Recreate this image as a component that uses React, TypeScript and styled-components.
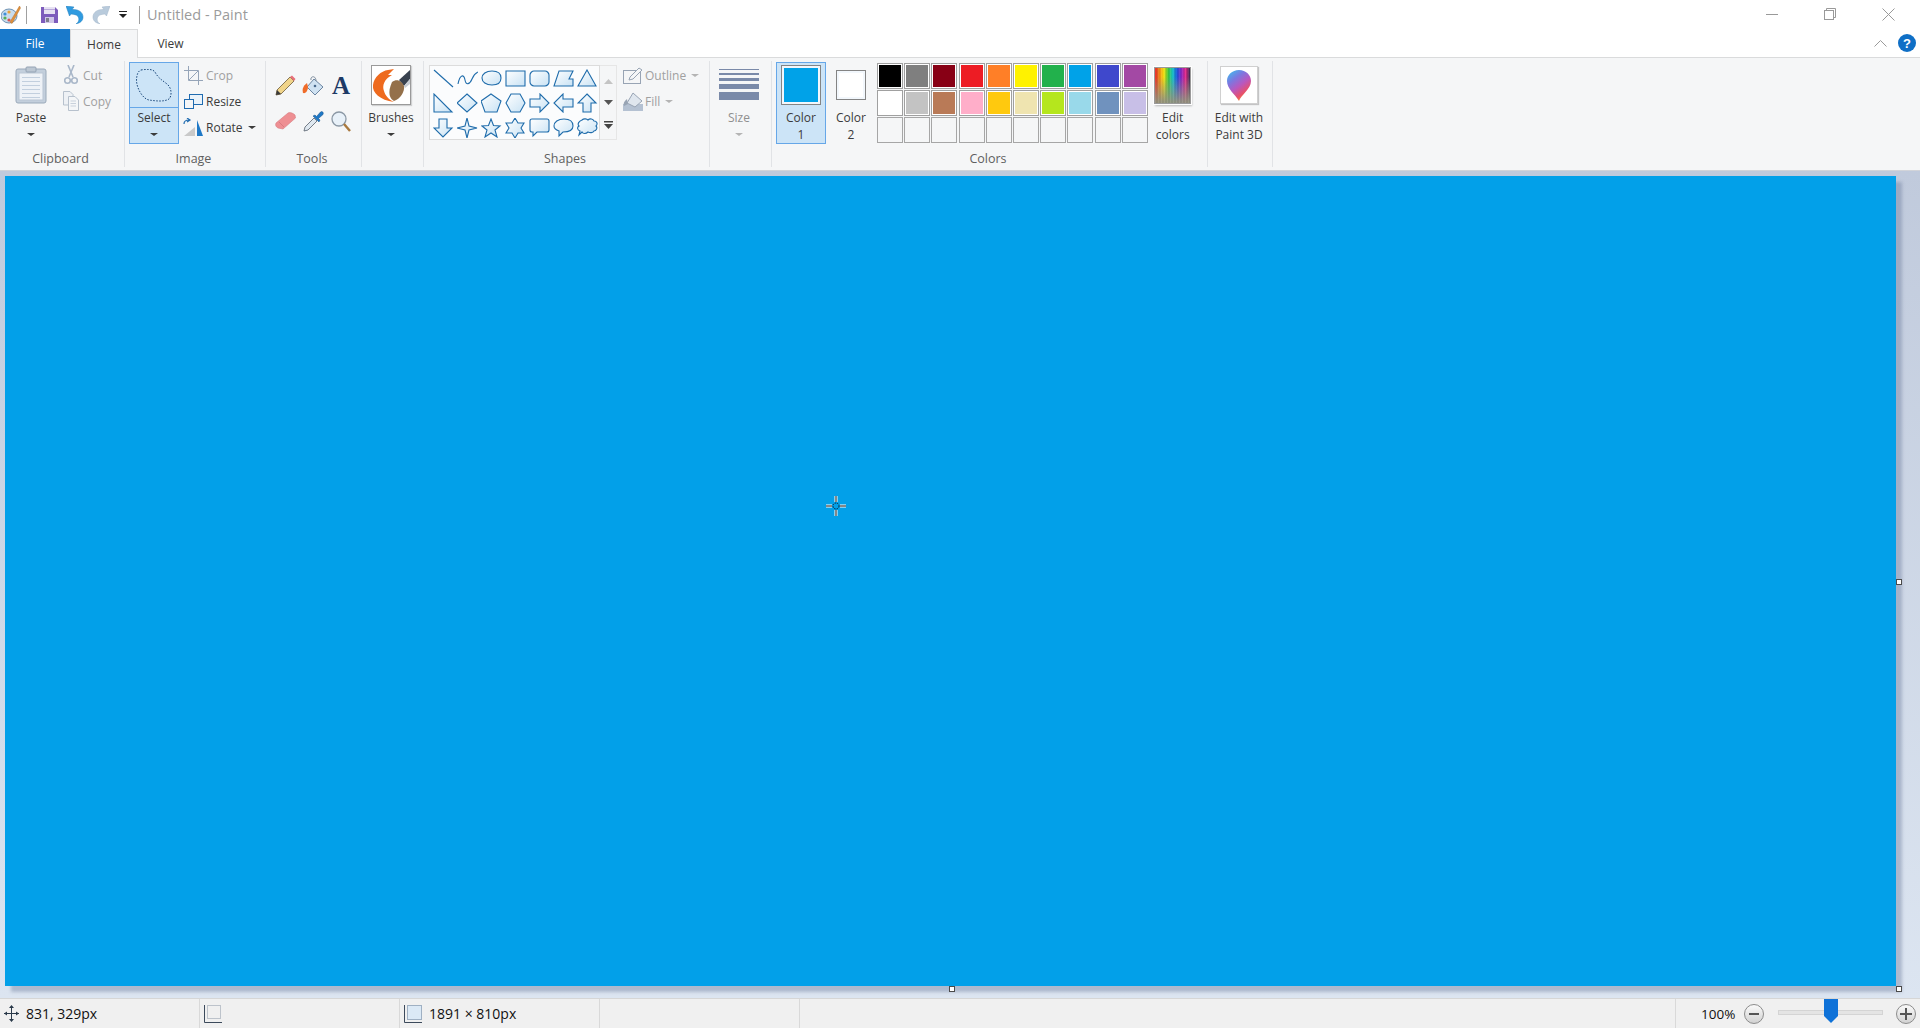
// Paint window - ribbon, canvas and status bar
import React from 'react';
import styled, { createGlobalStyle } from 'styled-components';

const GlobalStyle = createGlobalStyle`
  html, body {
    margin: 0;
    padding: 0;
    height: 100%;
    overflow: hidden;
  }
  #root {
    height: 100%;
  }
  * {
    box-sizing: border-box;
  }
`;

const Window = styled.div`
  width: 1920px;
  height: 1028px;
  display: flex;
  flex-direction: column;
  background: #fff;
  font-family: 'Open Sans', 'Noto Sans', sans-serif;
  font-size: 12px;
  color: #3b3b3b;
  overflow: hidden;
`;

/* ---------- title bar ---------- */
const TitleBar = styled.div`
  height: 29px;
  flex: none;
  display: flex;
  align-items: center;
`;

const QuickAccess = styled.div`
  display: flex;
  align-items: center;
  width: 147px;
  flex: none;
`;

const QatSlot = styled.div<{ $w: number }>`
  width: ${(p) => p.$w}px;
  flex: none;
  display: flex;
  justify-content: center;
  align-items: center;
`;

const Mirrored = styled.span`
  display: flex;
  transform: scaleX(-1);
`;

const QatDivider = styled.div`
  width: 1px;
  height: 18px;
  background: #a0a0a0;
  flex: none;
`;

const WindowTitle = styled.div`
  flex: 1;
  font-size: 14.5px;
  color: #9b9b9b;
`;

const WindowButtons = styled.div`
  display: flex;
  padding-right: 2px;
`;

const WindowButton = styled.div`
  width: 58.5px;
  display: flex;
  justify-content: center;
`;

/* ---------- tabs ---------- */
const TabRow = styled.div`
  height: 29px;
  flex: none;
  display: flex;
  align-items: stretch;
  border-bottom: 1px solid #dadbdc;
`;

const FileTab = styled.div`
  width: 70px;
  height: 28px;
  background: #1979ca;
  color: #fff;
  display: flex;
  align-items: center;
  justify-content: center;
`;

const Tab = styled.div<{ $active?: boolean }>`
  width: ${(p) => (p.$active ? '68px' : '65px')};
  height: 29px;
  display: flex;
  align-items: center;
  justify-content: center;
  color: #3b3b3b;
  background: ${(p) => (p.$active ? '#f5f6f7' : 'transparent')};
  border: ${(p) => (p.$active ? '1px solid #dadbdc' : 'none')};
  border-bottom: none;
`;

const TabRight = styled.div`
  margin-left: auto;
  display: flex;
  align-items: center;
  gap: 11px;
  padding-right: 4px;
`;

const HelpBadge = styled.div`
  width: 18px;
  height: 18px;
  border-radius: 50%;
  background: #0f6fc6;
  color: #fff;
  font-family: 'Liberation Sans', sans-serif;
  font-weight: 700;
  font-size: 13px;
  display: flex;
  align-items: center;
  justify-content: center;
`;

/* ---------- ribbon ---------- */
const Ribbon = styled.div`
  height: 112px;
  flex: none;
  display: flex;
  background: #f5f6f7;
  padding: 3px 0;
`;

const Group = styled.div<{ $w: number }>`
  width: ${(p) => p.$w}px;
  flex: none;
  display: flex;
  flex-direction: column;
  border-right: 1px solid #e1e3e6;
`;

const GroupBody = styled.div<{ $pl?: number; $gap?: number }>`
  height: 90px;
  padding-top: 1px;
  padding-left: ${(p) => p.$pl ?? 0}px;
  display: flex;
  gap: ${(p) => p.$gap ?? 0}px;
`;

const GroupLabel = styled.div`
  flex: 1;
  display: flex;
  align-items: center;
  justify-content: center;
  padding-right: 3px;
  color: #5f5f5f;
  font-size: 12.5px;
`;

const LargeButton = styled.div<{ $w: number; $pressed?: boolean; $disabled?: boolean }>`
  width: ${(p) => p.$w}px;
  height: 82px;
  flex: none;
  display: flex;
  flex-direction: column;
  align-items: center;
  padding-top: 2px;
  text-align: center;
  line-height: 17px;
  color: ${(p) => (p.$disabled ? '#8f8f8f' : '#3b3b3b')};
  background: ${(p) => (p.$pressed ? '#cce4f7' : 'transparent')};
  border: 1px solid ${(p) => (p.$pressed ? '#66a7e8' : 'transparent')};
`;

const SplitButton = styled(LargeButton)`
  padding-top: 0;
`;

const IconSlot = styled.div`
  height: 40px;
  margin-bottom: 4px;
  flex: none;
  display: flex;
  align-items: center;
  justify-content: center;
`;

const Caret = styled.div<{ $color?: string }>`
  width: 0;
  height: 0;
  margin-top: 7px;
  border-left: 4px solid transparent;
  border-right: 4px solid transparent;
  border-top: 3px solid ${(p) => p.$color ?? '#3b3b3b'};
`;

const InlineCaret = styled(Caret)`
  margin: 0 0 0 3px;
`;

const SplitTop = styled.div`
  width: 100%;
  height: 45px;
  flex: none;
  display: flex;
  align-items: center;
  justify-content: center;
  border-bottom: 1px solid #66a7e8;
`;

const SplitLabel = styled.span`
  margin-top: 1px;
`;

const SmallColumn = styled.div<{ $pl?: number }>`
  display: flex;
  flex-direction: column;
  padding-left: ${(p) => p.$pl ?? 0}px;
`;

const SmallRow = styled.div<{ $disabled?: boolean }>`
  height: 26px;
  display: flex;
  align-items: center;
  gap: 2px;
  color: ${(p) => (p.$disabled ? '#a0a0a0' : '#3b3b3b')};
`;

const SmallIcon = styled.div`
  width: 21px;
  flex: none;
  display: flex;
  justify-content: center;
`;

const ToolGrid = styled.div`
  display: grid;
  grid-template-columns: repeat(3, 28px);
  grid-auto-rows: 36px;
  padding-top: 5px;
  justify-items: center;
  align-items: center;
`;

const TextToolGlyph = styled.span`
  font-family: 'Liberation Serif', serif;
  font-weight: 700;
  font-size: 25px;
  line-height: 25px;
  color: #1d3a66;
`;

const BrushFrame = styled.div`
  width: 40px;
  height: 40px;
  border: 1px solid #9a9a9a;
  background: #fff;
  box-shadow: 1px 1px 1px rgba(0, 0, 0, 0.15);
`;

const ShapeGallery = styled.div`
  width: 171px;
  height: 75px;
  margin-top: 3px;
  border: 1px solid #dcdcdc;
  background: #fbfcfd;
  display: grid;
  grid-template-columns: repeat(7, 24px);
  grid-auto-rows: 24.3px;
  padding: 1px 0 0 1px;
  justify-items: center;
  align-items: center;
`;

const GalleryScroll = styled.div`
  width: 17px;
  height: 75px;
  margin-top: 3px;
  border: 1px solid #e6e6e6;
  border-left: none;
  display: flex;
  flex-direction: column;
  align-items: center;
  justify-content: space-around;
  padding: 5px 0 2px;
`;

const SizeStack = styled.div`
  width: 40px;
  height: 33px;
  display: flex;
  flex-direction: column;
  gap: 3px;
`;

const SizeLine = styled.div<{ $h: number }>`
  height: ${(p) => p.$h}px;
  background: #7a8aa9;
  flex: none;
`;

const ColorFrame = styled.div<{ $size: number; $color: string }>`
  width: ${(p) => p.$size}px;
  height: ${(p) => p.$size}px;
  border: 1px solid #848484;
  background: ${(p) => p.$color};
  box-shadow: inset 0 0 0 2px #f2f7fc;
`;

const Palette = styled.div`
  display: grid;
  grid-template-columns: repeat(10, 26px);
  grid-auto-rows: 26px;
  gap: 1px 1.2px;
  margin: 1px 0 0 1px;
  flex: none;
`;

const Swatch = styled.div<{ $color?: string }>`
  border: 1px solid ${(p) => (p.$color ? '#a0a0a0' : '#a6a6a6')};
  background: ${(p) => p.$color ?? 'transparent'};
  box-shadow: ${(p) => (p.$color ? 'inset 0 0 0 1px #fff' : 'none')};
`;

const EditColorsIcon = styled.div`
  width: 37px;
  height: 37px;
  border: 1px solid #9a9a9a;
  box-shadow: 0 0 0 1px #fff, 1px 2px 2px rgba(0, 0, 0, 0.25);
  background:
    repeating-linear-gradient(90deg, rgba(255, 255, 255, 0.05) 0 1px, rgba(0, 0, 0, 0.05) 1px 3px),
    linear-gradient(180deg, rgba(150, 150, 130, 0) 25%, rgba(150, 150, 130, 0.95) 95%),
    linear-gradient(90deg, #e8202a, #f08a18, #ffe812, #3fc83a, #1ac9c8, #1858e0, #8a28c8, #e82a8a, #302a50);
`;

const Paint3DFrame = styled.div`
  width: 38px;
  height: 38px;
  border: 1px solid #d0d0d0;
  background: #fff;
  box-shadow: 1px 1px 1px rgba(0, 0, 0, 0.2);
  display: flex;
  align-items: center;
  justify-content: center;
`;

/* ---------- canvas ---------- */
const Workspace = styled.div`
  flex: 1;
  min-height: 0;
  background: linear-gradient(180deg, #c0cadc, #dce5f1);
  border-top: 1px solid #d2d4d9;
  padding: 5px 0 0 5px;
`;

const Canvas = styled.div`
  position: relative;
  width: 1891px;
  height: 810px;
  background: #02a0e9;
  box-shadow: 6px 6px 3px 0 rgba(100, 115, 150, 0.38);
`;

const Handle = styled.div<{ $x: string; $y: string }>`
  position: absolute;
  left: ${(p) => p.$x};
  top: ${(p) => p.$y};
  width: 6px;
  height: 6px;
  background: #fff;
  border: 1px solid #4a4a4a;
`;

const CrossCursor = styled.svg`
  position: absolute;
  left: 820px;
  top: 319px;
`;

/* ---------- status bar ---------- */
const StatusBar = styled.div`
  height: 30px;
  flex: none;
  display: flex;
  background: #f0f0f0;
  border-top: 1px solid #d6d6d6;
  color: #111;
  font-size: 14px;
`;

const StatusCell = styled.div<{ $w: number }>`
  width: ${(p) => p.$w}px;
  flex: none;
  display: flex;
  align-items: center;
  gap: 7px;
  padding-left: 4px;
  border-right: 1px solid #d9d9d9;
`;

const ZoomArea = styled.div`
  margin-left: auto;
  width: 245px;
  display: flex;
  align-items: center;
  padding-left: 25px;
  border-left: 1px solid #d9d9d9;
`;

const ZoomValue = styled.span`
  width: 43px;
  font-size: 13.5px;
`;

const ZoomButton = styled.div`
  width: 20px;
  height: 20px;
  border-radius: 50%;
  border: 1px solid #8c8c8c;
  background: linear-gradient(180deg, #fafafa, #d2d2d2);
  display: flex;
  align-items: center;
  justify-content: center;
  flex: none;
`;

const SliderTrack = styled.div`
  position: relative;
  width: 105px;
  height: 5px;
  margin: -2px 13px 0 14px;
  background: #e4e4e4;
  border: 1px solid #d4d4d4;
  flex: none;
`;

const SliderThumb = styled.svg`
  position: absolute;
  left: 45px;
  top: -12px;
`;

/* ---------- icons ---------- */
const AppIcon = () => (
  <svg width="20" height="20" viewBox="0 0 20 20">
    <ellipse cx="8" cy="11" rx="8" ry="7" fill="#c9dcec" stroke="#6f93b4" />
    <circle cx="4" cy="9" r="1.6" fill="#3e8fd8" />
    <circle cx="8" cy="7" r="1.6" fill="#e8a23a" />
    <circle cx="4" cy="13" r="1.6" fill="#55b05a" />
    <circle cx="8" cy="15" r="1.6" fill="#d9534f" />
    <path d="M18.5 1 L9 17 L11 18.5 L19.5 3 Z" fill="#e0913c" stroke="#b8752e" strokeWidth="0.5" />
  </svg>
);

const SaveIcon = () => (
  <svg width="17" height="16" viewBox="0 0 17 16">
    <path d="M0 0 H14 L17 3 V16 H0 Z" fill="#7d5cbc" />
    <rect x="3" y="0" width="11" height="7" fill="#e6e1f2" />
    <rect x="3" y="2" width="11" height="1" fill="#b9a8dc" />
    <rect x="4" y="10" width="9" height="6" fill="#cfc6e8" />
    <rect x="5" y="11" width="3" height="4" fill="#7d7d8c" />
  </svg>
);

const UndoIcon = ({ color, shade }: { color: string; shade: string }) => (
  <svg width="18" height="18" viewBox="0 0 18 18">
    <path d="M0 0 L8 1 L6 3.5 C12 3 17 6 17 11 C17 15 14 17 10 18 C13 16 13.5 13 12 10.5 C10.5 8.5 8 8.5 5 8 L3.5 10 Z" fill={color} stroke={shade} strokeWidth="0.5" />
  </svg>
);

const QatDrop = () => (
  <svg width="8" height="8" viewBox="0 0 8 8">
    <rect x="0" y="0" width="8" height="1" fill="#222" />
    <path d="M0 3 H8 L4 7 Z" fill="#222" />
  </svg>
);

const PasteIcon = () => (
  <svg width="32" height="38" viewBox="0 0 32 38">
    <rect x="1" y="3" width="30" height="34" rx="2" fill="#c3cfdc" stroke="#9aa9ba" />
    <rect x="4" y="7" width="24" height="27" fill="#eef2f7" stroke="#b9c5d3" />
    {[11, 15, 19, 23, 27, 31].map((y) => (
      <rect key={y} x="7" y={y} width="18" height="1" fill="#c2cfde" />
    ))}
    <rect x="11" y="1" width="10" height="5" rx="1" fill="#bcc7d3" stroke="#94a3b4" />
  </svg>
);

const CutIcon = () => (
  <svg width="14" height="20" viewBox="0 0 14 20" fill="none" stroke="#a9b7c9" strokeWidth="1.6">
    <path d="M4 0 L9 12" />
    <path d="M10 0 L5 12" />
    <circle cx="3.5" cy="15.5" r="2.8" />
    <circle cx="10.5" cy="15.5" r="2.8" />
  </svg>
);

const CopyIcon = () => (
  <svg width="16" height="20" viewBox="0 0 16 20">
    <path d="M0.5 0.5 H7 L10 3.5 V14 H0.5 Z" fill="#eef1f5" stroke="#b7c1cd" />
    <path d="M5.5 5.5 H12 L15.5 9 V19.5 H5.5 Z" fill="#f4f6f8" stroke="#b7c1cd" />
    <path d="M7.5 10 H13 M7.5 12.5 H13 M7.5 15 H13" stroke="#c8d1dc" />
  </svg>
);

const SelectIcon = () => (
  <svg width="36" height="33" viewBox="0 0 36 33">
    <path
      d="M5 1 C11 0 17 0 19 3 C22 9 26 11 31 15 C36 19 36 27 33 30 C28 33 20 32 13 31 C7 30 1 20 0.5 12 C0.5 6 2 2 5 1 Z"
      fill="none"
      stroke="#174478"
      strokeWidth="1"
      strokeDasharray="1.5 1.5"
    />
  </svg>
);

const CropIcon = () => (
  <svg width="19" height="19" viewBox="0 0 19 19" fill="none" stroke="#95a4b8">
    <path d="M4.5 0 V14.5 H19" />
    <path d="M0 4.5 H14.5 V19" />
    <path d="M5 14 L14 5" />
  </svg>
);

const ResizeIcon = () => (
  <svg width="19" height="15" viewBox="0 0 19 15">
    <rect x="5.5" y="0.5" width="13" height="10" fill="#e9f2fa" stroke="#1f6bb0" />
    <rect x="0.5" y="5.5" width="9" height="9" fill="#f5f6f7" stroke="#1f6bb0" />
  </svg>
);

const RotateIcon = () => (
  <svg width="21" height="19" viewBox="0 0 21 19">
    <path d="M1 6 C1 3 3 2 6 2 M4 0 L7 2 L4 4" fill="none" stroke="#1f6bb0" strokeWidth="1.2" />
    <path d="M12 18 V9 L1 18 Z" fill="#c9c9c9" />
    <path d="M14 18 V2 L20 18 Z" fill="#1e78c6" />
  </svg>
);

const PencilIcon = () => (
  <svg width="21" height="21" viewBox="0 0 21 21">
    <path d="M1 20 L2 15 L15 2 L19 6 L6 19 Z" fill="#f0d48a" stroke="#6b5a3a" strokeWidth="0.8" />
    <path d="M1 20 L2 15 L6 19 Z" fill="#3a3a3a" />
    <path d="M15 2 L17 0.5 L20.5 4 L19 6 Z" fill="#e8707a" />
  </svg>
);

const FillIcon = () => (
  <svg width="22" height="22" viewBox="0 0 22 22">
    <path d="M12 5 L21 13 L13 21 L5 13 Z" fill="#cfe2f2" stroke="#6b84a0" />
    <path d="M9 6 C8 2 14 1 14 7" fill="none" stroke="#7b8b9c" />
    <path d="M5 9 C1 12 0 15 1 19 C4 20 6 16 6 13 Z" fill="#ef6c2a" />
    <circle cx="13" cy="12" r="1.3" fill="#4a6a8c" />
  </svg>
);

const EraserIcon = () => (
  <svg width="21" height="18" viewBox="0 0 21 18">
    <path d="M1 11 L13 1 C15 0 18 1 20 3 L20.5 6 L8 17 L3 16 C1 15 0 13 1 11 Z" fill="#ee8f93" stroke="#d77a80" strokeWidth="0.6" />
    <path d="M4 10 L9 15" stroke="#d97a80" fill="none" />
  </svg>
);

const PickerIcon = () => (
  <svg width="21" height="21" viewBox="0 0 21 21">
    <path d="M1 20 L2 16 L11 7 L14 10 L5 19 Z" fill="#dfe8f0" stroke="#55606c" strokeWidth="0.8" />
    <path d="M10 5 L16 11 L17 9 L15.5 7.5 L20 3.5 C21 1.5 19 -0.5 17.5 1 L13.5 5.5 L12 4 Z" fill="#1e78c6" stroke="#144f85" strokeWidth="0.5" />
  </svg>
);

const MagnifierIcon = () => (
  <svg width="20" height="21" viewBox="0 0 20 21">
    <circle cx="8" cy="8" r="7" fill="#e8f1f9" stroke="#8b98a5" strokeWidth="1.3" />
    <path d="M13 13 L19 20" stroke="#a9793f" strokeWidth="2.4" />
  </svg>
);

const BrushIcon = () => (
  <svg width="38" height="38" viewBox="0 0 38 38">
    <path d="M38 4 L27 14 L32 20 L38 13 Z" fill="#39424f" />
    <path d="M38 13 L32 20 L33 22 L38 18 Z" fill="#c7ccd3" />
    <path d="M20 16 C25 12 30 15 32 20 C33 26 28 33 22 35 C18 33 15 27 20 16 Z" fill="#94704a" />
    <path d="M16 4 C9 5 2 11 1 19 C0 27 8 34 22 36 C17 34 13 29 12 25 C10 20 12 13 20 9 L16 9 L22 3 Z" fill="#ee6a1e" />
  </svg>
);

const Paint3DIcon = () => (
  <svg width="26" height="33" viewBox="0 0 26 33">
    <defs>
      <linearGradient id="p3d" x1="0" y1="0" x2="0.6" y2="1">
        <stop offset="0" stopColor="#33c9f0" />
        <stop offset="0.35" stopColor="#7b78e0" />
        <stop offset="0.6" stopColor="#b858c0" />
        <stop offset="0.85" stopColor="#e8506a" />
        <stop offset="1" stopColor="#f59a30" />
      </linearGradient>
    </defs>
    <path d="M13 1 C6 1 1 6 1 12 C1 20 9 25 13 32 C15 26 25 20 25 12 C25 6 20 1 13 1 Z" fill="url(#p3d)" />
  </svg>
);

const OutlineIcon = () => (
  <svg width="20" height="17" viewBox="0 0 20 17">
    <rect x="0.5" y="3.5" width="17" height="13" fill="none" stroke="#98a4b4" />
    <path d="M6 13 L7 10 L16 1 L19 3 L10 12 Z" fill="#f5f6f7" stroke="#98a4b4" />
  </svg>
);

const FillToolIcon = () => (
  <svg width="20" height="20" viewBox="0 0 20 20">
    <rect x="0" y="13" width="20" height="7" fill="#b4c1d2" />
    <path d="M10 2 L19 10 L12 16 L4 12 Z" fill="#dfe6ee" stroke="#98a4b4" />
    <path d="M4 8 C1 10 0 13 1 15 L5 13 Z" fill="#98a4b4" />
  </svg>
);

const StatusMove = () => (
  <svg width="15" height="17" viewBox="0 0 15 17" fill="#2a3a4a">
    <path d="M7 2 H8 V15 H7 Z M0 8 H15 V9 H0 Z" />
    <path d="M7.5 0 L10 3 H5 Z M7.5 17 L10 14 H5 Z M0 8.5 L3 6.5 V10.5 Z M15 8.5 L12 6.5 V10.5 Z" />
  </svg>
);

const StatusSelection = () => (
  <svg width="18" height="18" viewBox="0 0 18 18" fill="none">
    <path d="M0.5 0 V17.5 H18" stroke="#3c4a5c" />
    <rect x="3.5" y="0.5" width="13" height="13" stroke="#8b96a6" strokeDasharray="1 1" />
  </svg>
);

const StatusCanvas = () => (
  <svg width="18" height="18" viewBox="0 0 18 18">
    <rect x="3.5" y="0.5" width="14" height="14" fill="#dbe9f6" stroke="#9fb0c3" />
    <path d="M0.5 0 V17.5 H18" fill="none" stroke="#3c4a5c" />
  </svg>
);

/* ---------- shapes gallery ---------- */
const shapePaths: string[] = [
  'M1 1 L20 18',
  'M1 15 C3 5 7 5 8 11 C9 17 13 15 15 10 C17 5 19 4 21 3',
  'M11 2 C17 2 20 5 20 9 C20 13 17 16 11 16 C5 16 1 13 1 9 C1 5 5 2 11 2 Z',
  'M1 2 H20 V17 H1 Z',
  'M5 2 H16 C18 2 20 4 20 6 V13 C20 15 18 17 16 17 H5 C3 17 1 15 1 13 V6 C1 4 3 2 5 2 Z',
  'M6 2 H20 L16 10 H20 V17 H1 Z',
  'M10 1 L19 17 H1 Z',
  'M1 1 V19 H19 Z',
  'M10 1 L20 10 L10 19 L0 10 Z',
  'M10 1 L20 8 L16 19 H4 L0 8 Z',
  'M6 1 H15 L20 10 L15 19 H6 L1 10 Z',
  'M1 6 H11 V1 L20 10 L11 19 V14 H1 Z',
  'M20 6 H10 V1 L1 10 L10 19 V14 H20 Z',
  'M10 1 L19 10 H14 V19 H6 V10 H1 Z',
  'M6 1 H14 V10 H19 L10 19 L1 10 H6 Z',
  'M10 0 L12 8 L20 10 L12 12 L10 20 L8 12 L0 10 L8 8 Z',
  'M10 1 L12.5 7.5 L19 8 L14 12 L16 19 L10 15 L4 19 L6 12 L1 8 L7.5 7.5 Z',
  'M10 0 L13 5 H19 L16 10 L19 15 H13 L10 20 L7 15 H1 L4 10 L1 5 H7 Z',
  'M3 1 H18 C19 1 20 2 20 3 V12 C20 13 19 14 18 14 H8 L4 18 V14 H3 C2 14 1 13 1 12 V3 C1 2 2 1 3 1 Z',
  'M11 1 C17 1 20 4 20 8 C20 12 16 14 10 14 L6 18 L6 13 C3 12 1 10 1 8 C1 4 5 1 11 1 Z',
  'M5 2 C7 0 10 1 11 2 C13 0 16 1 17 3 C20 3 21 6 19 8 C21 10 19 13 17 13 C16 15 13 15 11 14 C9 16 6 16 5 14 L2 17 L3 13 C0 12 0 9 2 8 C0 6 2 3 5 2 Z',
];

const ShapeIcon = ({ d, open }: { d: string; open: boolean }) => (
  <svg width="21" height="20" viewBox="0 0 21 20">
    <path d={d} fill={open ? 'none' : 'url(#shapeFill)'} stroke="#1f6cab" strokeWidth="1.1" />
  </svg>
);

const paletteRows: (string | undefined)[] = [
  '#000000', '#7f7f7f', '#880015', '#ed1c24', '#ff7f27', '#fff200', '#22b14c', '#00a2e8', '#3f48cc', '#a349a4',
  '#ffffff', '#c3c3c3', '#b97a57', '#ffaec9', '#ffc90e', '#efe4b0', '#b5e61d', '#99d9ea', '#7092be', '#c8bfe7',
  ...Array.from({ length: 10 }, () => undefined),
];

const App: React.FC = () => (
  <Window>
    <GlobalStyle />
    <svg width="0" height="0" style={{ position: 'absolute' }}>
      <defs>
        <linearGradient id="shapeFill" x1="0" y1="0" x2="1" y2="1">
          <stop offset="0" stopColor="#ffffff" />
          <stop offset="1" stopColor="#c8e2f4" />
        </linearGradient>
      </defs>
    </svg>

    <TitleBar>
      <QuickAccess>
        <QatSlot $w={21}><AppIcon /></QatSlot>
        <QatSlot $w={5} />
        <QatDivider />
        <QatSlot $w={14} />
        <QatSlot $w={17}><SaveIcon /></QatSlot>
        <QatSlot $w={34}><UndoIcon color="#2f9be0" shade="#1f7dbd" /></QatSlot>
        <QatSlot $w={18}><Mirrored><UndoIcon color="#b9cbdc" shade="#a0b4c8" /></Mirrored></QatSlot>
        <QatSlot $w={25}><QatDrop /></QatSlot>
        <QatSlot $w={4} />
        <QatDivider />
      </QuickAccess>
      <WindowTitle>Untitled - Paint</WindowTitle>
      <WindowButtons>
        <WindowButton>
          <svg width="12" height="12" viewBox="0 0 12 12"><path d="M0 6.5 H12" stroke="#999" /></svg>
        </WindowButton>
        <WindowButton>
          <svg width="12" height="12" viewBox="0 0 12 12" fill="none" stroke="#999"><rect x="0.5" y="2.5" width="9" height="9" /><path d="M2.5 2.5 V0.5 H11.5 V9.5 H9.5" /></svg>
        </WindowButton>
        <WindowButton>
          <svg width="13" height="13" viewBox="0 0 13 13" stroke="#999"><path d="M0.5 0.5 L12.5 12.5 M12.5 0.5 L0.5 12.5" /></svg>
        </WindowButton>
      </WindowButtons>
    </TitleBar>

    <TabRow>
      <FileTab>File</FileTab>
      <Tab $active>Home</Tab>
      <Tab>View</Tab>
      <TabRight>
        <svg width="13" height="7" viewBox="0 0 13 7" fill="none" stroke="#9a9a9a"><path d="M0.5 6.5 L6.5 0.5 L12.5 6.5" /></svg>
        <HelpBadge>?</HelpBadge>
      </TabRight>
    </TabRow>

    <Ribbon>
      <Group $w={125}>
        <GroupBody $pl={7} $gap={5}>
          <LargeButton $w={48}>
            <IconSlot><PasteIcon /></IconSlot>
            Paste
            <Caret />
          </LargeButton>
          <SmallColumn>
            <SmallRow $disabled><SmallIcon><CutIcon /></SmallIcon>Cut</SmallRow>
            <SmallRow $disabled><SmallIcon><CopyIcon /></SmallIcon>Copy</SmallRow>
          </SmallColumn>
        </GroupBody>
        <GroupLabel>Clipboard</GroupLabel>
      </Group>

      <Group $w={141}>
        <GroupBody $pl={4} $gap={4}>
          <SplitButton $w={50} $pressed>
            <SplitTop><SelectIcon /></SplitTop>
            <SplitLabel>Select</SplitLabel>
            <Caret />
          </SplitButton>
          <SmallColumn>
            <SmallRow $disabled><SmallIcon><CropIcon /></SmallIcon>Crop</SmallRow>
            <SmallRow><SmallIcon><ResizeIcon /></SmallIcon>Resize</SmallRow>
            <SmallRow><SmallIcon><RotateIcon /></SmallIcon>Rotate<InlineCaret /></SmallRow>
          </SmallColumn>
        </GroupBody>
        <GroupLabel>Image</GroupLabel>
      </Group>

      <Group $w={96}>
        <GroupBody $pl={5}>
          <ToolGrid>
            <PencilIcon />
            <FillIcon />
            <TextToolGlyph>A</TextToolGlyph>
            <EraserIcon />
            <PickerIcon />
            <MagnifierIcon />
          </ToolGrid>
        </GroupBody>
        <GroupLabel>Tools</GroupLabel>
      </Group>

      <Group $w={62}>
        <GroupBody $pl={3}>
          <LargeButton $w={52}>
            <IconSlot><BrushFrame><BrushIcon /></BrushFrame></IconSlot>
            Brushes
            <Caret />
          </LargeButton>
        </GroupBody>
        <GroupLabel>&nbsp;</GroupLabel>
      </Group>

      <Group $w={286}>
        <GroupBody $pl={5}>
          <ShapeGallery>
            {shapePaths.map((d, i) => (
              <ShapeIcon key={d} d={d} open={i < 2} />
            ))}
          </ShapeGallery>
          <GalleryScroll>
            <svg width="9" height="5" viewBox="0 0 9 5"><path d="M4.5 0 L9 5 H0 Z" fill="#c4c4c4" /></svg>
            <svg width="9" height="5" viewBox="0 0 9 5"><path d="M0 0 H9 L4.5 5 Z" fill="#555" /></svg>
            <svg width="9" height="8" viewBox="0 0 9 8"><rect width="9" height="1.5" fill="#444" /><path d="M0 3 H9 L4.5 8 Z" fill="#444" /></svg>
          </GalleryScroll>
          <SmallColumn $pl={6}>
            <SmallRow $disabled><OutlineIcon />Outline<InlineCaret $color="#b4b4b4" /></SmallRow>
            <SmallRow $disabled><FillToolIcon />Fill<InlineCaret $color="#b4b4b4" /></SmallRow>
          </SmallColumn>
        </GroupBody>
        <GroupLabel>Shapes</GroupLabel>
      </Group>

      <Group $w={62}>
        <GroupBody $pl={3}>
          <LargeButton $w={52} $disabled>
            <IconSlot>
              <SizeStack>
                <SizeLine $h={1} />
                <SizeLine $h={2} />
                <SizeLine $h={3} />
                <SizeLine $h={5} />
                <SizeLine $h={8} />
              </SizeStack>
            </IconSlot>
            Size
            <Caret $color="#b4b4b4" />
          </LargeButton>
        </GroupBody>
        <GroupLabel>&nbsp;</GroupLabel>
      </Group>

      <Group $w={436}>
        <GroupBody $pl={4} $gap={2}>
          <LargeButton $w={50} $pressed>
            <IconSlot><ColorFrame $size={40} $color="#00a2e8" /></IconSlot>
            Color
            <br />
            1
          </LargeButton>
          <LargeButton $w={46}>
            <IconSlot><ColorFrame $size={30} $color="#fff" /></IconSlot>
            Color
            <br />
            2
          </LargeButton>
          <Palette>
            {paletteRows.map((c, i) => (
              <Swatch key={i} $color={c} />
            ))}
          </Palette>
          <LargeButton $w={46}>
            <IconSlot><EditColorsIcon /></IconSlot>
            Edit
            <br />
            colors
          </LargeButton>
        </GroupBody>
        <GroupLabel>Colors</GroupLabel>
      </Group>

      <Group $w={65}>
        <GroupBody>
          <LargeButton $w={62}>
            <IconSlot><Paint3DFrame><Paint3DIcon /></Paint3DFrame></IconSlot>
            Edit with
            <br />
            Paint 3D
          </LargeButton>
        </GroupBody>
        <GroupLabel>&nbsp;</GroupLabel>
      </Group>
    </Ribbon>

    <Workspace>
      <Canvas>
        <CrossCursor width="22" height="22" viewBox="0 0 22 22">
          <path d="M11 1 V7 M11 15 V21 M1 11 H7 M15 11 H21" stroke="#fff" strokeWidth="3" />
          <path d="M11 1 V7 M11 15 V21 M1 11 H7 M15 11 H21" stroke="#111" strokeWidth="1" />
          <circle cx="11" cy="11" r="3" fill="none" stroke="#123" strokeWidth="1" strokeDasharray="1.5 1" />
        </CrossCursor>
        <Handle $x="100%" $y="calc(50% - 2px)" />
        <Handle $x="calc(50% - 2px)" $y="100%" />
        <Handle $x="100%" $y="100%" />
      </Canvas>
    </Workspace>

    <StatusBar>
      <StatusCell $w={200}><StatusMove />831, 329px</StatusCell>
      <StatusCell $w={200}><StatusSelection /></StatusCell>
      <StatusCell $w={200}><StatusCanvas />1891 × 810px</StatusCell>
      <StatusCell $w={200} />
      <ZoomArea>
        <ZoomValue>100%</ZoomValue>
        <ZoomButton>
          <svg width="10" height="10" viewBox="0 0 10 10"><rect y="4" width="10" height="2" fill="#555" /></svg>
        </ZoomButton>
        <SliderTrack>
          <SliderThumb width="14" height="24" viewBox="0 0 14 24"><path d="M0 0 H14 V17 L7 24 L0 17 Z" fill="#0f72d8" /></SliderThumb>
        </SliderTrack>
        <ZoomButton>
          <svg width="12" height="12" viewBox="0 0 12 12"><path d="M5 0 H7 V5 H12 V7 H7 V12 H5 V7 H0 V5 H5 Z" fill="#555" /></svg>
        </ZoomButton>
      </ZoomArea>
    </StatusBar>
  </Window>
);

export default App;
